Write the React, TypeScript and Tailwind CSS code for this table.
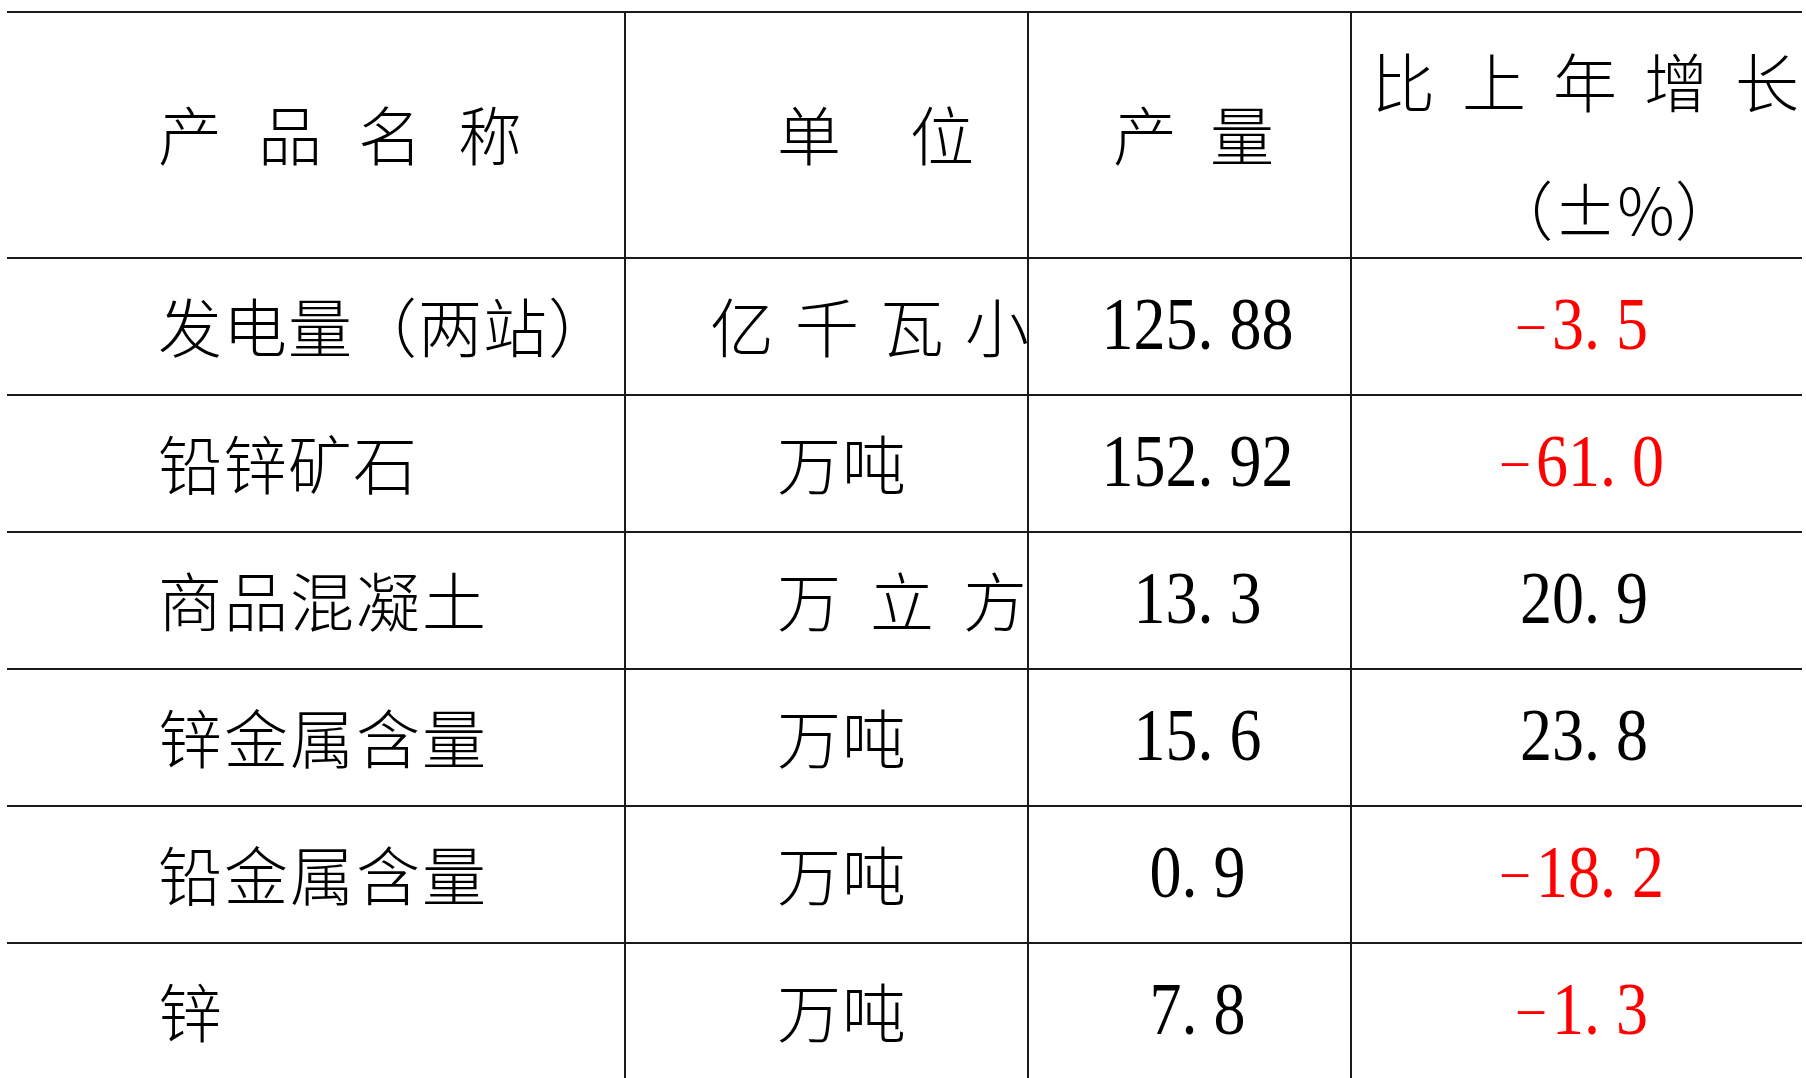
import React from "react";

const CJK = { fontFamily: '"Noto Sans CJK SC", "Noto Sans", sans-serif' };

type Row = {
  name: string;
  nameTrack: string;
  unit: string;
  unitPad: string;
  unitTrack: string;
  qty: string;
  growth: string;
  red: boolean;
};

const rows: Row[] = [
  { name: "发电量（两站）", nameTrack: "tracking-[1px]", unit: "亿千瓦小", unitPad: "pl-[84px]", unitTrack: "tracking-[21px]", qty: "125.88", growth: "-3.5", red: true },
  { name: "铅锌矿石", nameTrack: "tracking-[1px]", unit: "万吨", unitPad: "pl-[151px]", unitTrack: "tracking-[1px]", qty: "152.92", growth: "-61.0", red: true },
  { name: "商品混凝土", nameTrack: "tracking-[2px]", unit: "万立方", unitPad: "pl-[151px]", unitTrack: "tracking-[29px]", qty: "13.3", growth: "20.9", red: false },
  { name: "锌金属含量", nameTrack: "tracking-[2px]", unit: "万吨", unitPad: "pl-[151px]", unitTrack: "tracking-[1px]", qty: "15.6", growth: "23.8", red: false },
  { name: "铅金属含量", nameTrack: "tracking-[2px]", unit: "万吨", unitPad: "pl-[151px]", unitTrack: "tracking-[1px]", qty: "0.9", growth: "-18.2", red: true },
  { name: "锌", nameTrack: "tracking-[1px]", unit: "万吨", unitPad: "pl-[151px]", unitTrack: "tracking-[1px]", qty: "7.8", growth: "-1.3", red: true },
];

function Num({ v, red }: { v: string; red?: boolean }) {
  return (
    <div
      className={
        red
          ? "flex text-[64px] leading-none scale-y-[1.16] text-[#ff0000]"
          : "flex text-[64px] leading-none scale-y-[1.16] text-black"
      }
      style={{ fontFamily: '"Liberation Serif", serif' }}
    >
      {v.split("").map((c, i) => (
        <span
          key={i}
          className={
            c === "."
              ? "inline-block w-[32px] text-left"
              : c === "-"
              ? "inline-block w-[32px] text-center scale-x-[1.6] scale-y-[0.5] -translate-x-[5px]"
              : "inline-block w-[32px] text-center"
          }
        >
          {c}
        </span>
      ))}
    </div>
  );
}

export default function App() {
  return (
    <div className="w-[1806px] h-[1078px] bg-white overflow-hidden">
      <div className="ml-[7px] mt-[11px] w-[1795px] text-black">
        {/* header */}
        <div className="grid grid-cols-[617px_403px_323px_452px] h-[246px] border-t-2 border-[#1a1a1a]">
          <div className="flex items-center pl-[151px] pb-[6px]">
            <span className="text-[64px] font-light leading-none tracking-[36px] whitespace-nowrap" style={CJK}>
              产品名称
            </span>
          </div>
          <div className="flex items-center pl-[151px] pb-[6px] border-l-2 border-[#1a1a1a]">
            <span className="text-[64px] font-light leading-none tracking-[69px] whitespace-nowrap" style={CJK}>
              单位
            </span>
          </div>
          <div className="flex items-center pl-[84px] pb-[6px] border-l-2 border-[#1a1a1a]">
            <span className="text-[64px] font-light leading-none tracking-[33px] whitespace-nowrap" style={CJK}>
              产量
            </span>
          </div>
          <div className="flex flex-col border-l-2 border-[#1a1a1a]">
            <div className="h-[80px] mt-[26px] flex items-center pl-[19px] text-[64px] font-light leading-none whitespace-nowrap" style={CJK}>
              <span className="tracking-[27px]">比上年增</span>
              <span>长</span>
            </div>
            <div className="h-[80px] mt-[48px] flex items-center justify-center pl-[74px]">
              <span className="text-[64px] font-light leading-none whitespace-nowrap" style={CJK}>
                （±%）
              </span>
            </div>
          </div>
        </div>

        {rows.map((r, i) => (
          <div
            key={i}
            className="grid grid-cols-[617px_403px_323px_452px] h-[137px] border-t-2 border-[#1a1a1a]"
          >
            <div className="flex items-center pl-[151px] pb-[6px]">
              <span className={"text-[64px] font-light leading-none whitespace-nowrap " + r.nameTrack} style={CJK}>
                {r.name}
              </span>
            </div>
            <div className={"flex items-center pb-[6px] border-l-2 border-[#1a1a1a] overflow-visible " + r.unitPad}>
              <span className={"text-[64px] font-light leading-none whitespace-nowrap " + r.unitTrack} style={CJK}>
                {r.unit}
              </span>
            </div>
            <div className="flex items-center justify-center pl-[16px] pb-[4px] border-l-2 border-[#1a1a1a]">
              <Num v={r.qty} />
            </div>
            <div className="flex items-center justify-center pl-[14px] pb-[4px] border-l-2 border-[#1a1a1a]">
              <Num v={r.growth} red={r.red} />
            </div>
          </div>
        ))}
      </div>
    </div>
  );
}
